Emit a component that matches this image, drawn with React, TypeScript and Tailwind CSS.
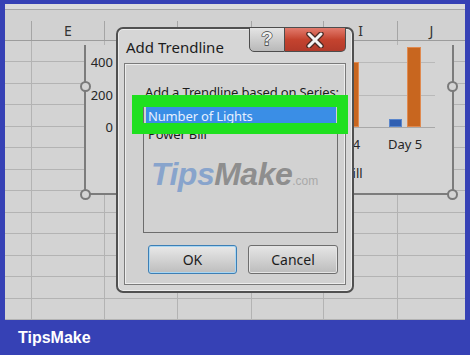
import React from "react";

const cols = [
  { w: 27, label: "" },
  { w: 73, label: "E" },
  { w: 73, label: "" },
  { w: 74, label: "" },
  { w: 72, label: "" },
  { w: 74, label: "I" },
  { w: 67, label: "J" },
];

const rows = Array.from({ length: 13 }, (_, i) => i);

const groups = [
  { day: "Day 1", blue: 4, orange: 30 },
  { day: "Day 2", blue: 5, orange: 45 },
  { day: "Day 3", blue: 6, orange: 55 },
  { day: "Day 4", blue: 7, orange: 65 },
  { day: "Day 5", blue: 8, orange: 80 },
];

const handle =
  "absolute w-[11px] h-[11px] rounded-full border-2 border-[#7a7a7a] bg-[#d4d4d4]";

function Chart() {
  return (
    <div className="absolute left-[84px] top-[45px] w-[370px] h-[150px] bg-[#d4d4d4] border-l-2 border-r-2 border-b-2 border-[#7c7c7c] flex flex-col text-[13px] text-[#262626]">
      <div className="mt-[17px] flex items-start h-[66px]">
        <div className="w-[29px] h-[66px] -mt-[9px] flex flex-col items-end pr-[2px] leading-[18px]">
          <div className="h-[18px] shrink-0">400</div>
          <div className="h-[18px] shrink-0 mt-[15px]">200</div>
          <div className="h-[18px] shrink-0 mt-[14px]">0</div>
        </div>
        <div className="relative ml-[3px] w-[317px] h-[66px]">
          <div className="h-[33px] border-t border-[#b9b9b9]" />
          <div className="h-[33px] border-t border-b border-t-[#b9b9b9] border-b-[#a8a8a8]" />
          <div className="absolute left-0 right-0 bottom-[1px] flex items-end pl-[23px] gap-[30px]">
            {groups.map((g) => (
              <div key={g.day} className="flex items-end gap-[5px]">
                <div
                  className="w-[13px] bg-[#2f5fb2] border border-[#5a86cc]"
                  style={{ height: g.blue }}
                />
                <div
                  className="w-[14px] bg-[#c8661f] border border-[#e08a50]"
                  style={{ height: g.orange }}
                />
              </div>
            ))}
          </div>
        </div>
      </div>
      <div className="mt-[7px] flex pl-[55px] gap-[30px] leading-[18px]">
        {groups.map((g) => (
          <div key={g.day} className="w-[32px] flex justify-center whitespace-nowrap">
            {g.day}
          </div>
        ))}
      </div>
      <div className="mt-[11px] flex justify-center items-center gap-[12px] leading-[18px] pr-[14px]">
        <div className="flex items-center gap-[4px]">
          <div className="w-[7px] h-[7px] bg-[#2f5fb2]" />
          <span>Number of Lights</span>
        </div>
        <div className="flex items-center gap-[4px]">
          <div className="w-[7px] h-[7px] bg-[#c8661f]" />
          <span>Power Bill</span>
        </div>
      </div>
    </div>
  );
}

function Dialog() {
  return (
    <div className="absolute left-[116px] top-[27px] w-[238px] h-[266px] rounded-[7px] border-2 border-[#505050] bg-[#d6d6d6] shadow-[inset_0_0_0_1px_#ececec] flex flex-col">
      <div className="h-[34px] shrink-0 pl-[8px] flex items-center text-[15px] text-[#1c1c1c] pt-[2px]">
        Add Trendline
      </div>
      <div className="flex-1 mx-[6px] mb-[6px] border border-[#7a7a7a] shadow-[inset_0_0_0_1px_#ededed] bg-[#d1d1d1] pt-[19px] px-[18px]">
        <div className="h-[18px] leading-[18px] pl-[2px] text-[13px] tracking-[-0.15px] text-[#1c1c1c] whitespace-nowrap">
          Add a Trendline based on Series:
        </div>
        <div className="mt-[4px] w-[195px] h-[128px] border border-[#6d6d6d] bg-[#d2d2d2] p-px">
          <div className="h-[18px] leading-[18px] bg-[#3a8ee6] text-[#e6f0ff] text-[13px] tracking-[-0.15px] pl-[2px] ml-px">
            Number of Lights
          </div>
          <div className="h-[18px] leading-[18px] text-[#1c1c1c] text-[13px] tracking-[-0.15px] pl-[3px]">
            Power Bill
          </div>
        </div>
        <div className="mt-[12px] ml-[5px] w-[190px] flex justify-between">
          <div className="w-[89px] h-[29px] rounded-[3px] border border-[#3d7fb5] shadow-[inset_0_0_0_1px_#a9d6f2] bg-gradient-to-b from-[#e9e9e9] to-[#bdbdbd] flex items-center justify-center text-[14px] text-[#1c1c1c]">
            OK
          </div>
          <div className="w-[90px] h-[29px] rounded-[3px] border border-[#6e6e6e] shadow-[inset_0_0_0_1px_#e4e4e4] bg-gradient-to-b from-[#e6e6e6] to-[#bcbcbc] flex items-center justify-center text-[14px] text-[#1c1c1c]">
            Cancel
          </div>
        </div>
      </div>
      <div className="absolute top-[-2px] right-[6px] flex h-[25px]">
        <div
          className="w-[36px] h-full rounded-bl-[5px] border border-[#4d4d4d] bg-gradient-to-b from-[#e4e4e4] to-[#b9b9b9] flex items-center justify-center text-[19px] font-bold text-[#f0f0f0] [-webkit-text-stroke:1.3px_#3a3a3a] [paint-order:stroke_fill]"
          style={{ fontFamily: '"Liberation Sans", Arial, sans-serif' }}
        >
          ?
        </div>
        <div className="w-[61px] h-full rounded-br-[5px] border border-l-0 border-[#4d4d4d] bg-gradient-to-b from-[#e27a6c] via-[#c4432f] to-[#b23a2a] flex items-center justify-center">
          <svg width="20" height="16" viewBox="0 0 20 16">
            <path d="M4 2 L16 14 M16 2 L4 14" stroke="#4a2a24" strokeWidth="5.5" strokeLinecap="round" />
            <path d="M4 2 L16 14 M16 2 L4 14" stroke="#f4f4f4" strokeWidth="3" strokeLinecap="round" />
          </svg>
        </div>
      </div>
    </div>
  );
}

export default function App() {
  return (
    <div
      className="relative w-[470px] h-[355px] overflow-hidden bg-[#3641b5]"
      style={{ fontFamily: '"Noto Sans", "Open Sans", sans-serif' }}
    >
      <div className="pt-[4px] px-[5px]">
        <div className="w-[460px] h-[316px] bg-[#d3d3d3] overflow-hidden flex flex-col">
          <div className="h-[7px] bg-[#dcdcdc] border-b border-[#a8a8a8]" />
          <div className="h-[14px] bg-[#d1d1d1]" />
          <div className="h-[20px] flex border-b border-[#9c9c9c] bg-[#d1d1d1]">
            {cols.map((c, i) => (
              <div
                key={i}
                style={{ width: c.w }}
                className={`h-full shrink-0 flex items-center justify-center text-[14px] text-[#333] ${
                  i < cols.length - 1 ? "border-r border-[#a5a5a5]" : ""
                }`}
              >
                {c.label}
              </div>
            ))}
          </div>
          {rows.map((r) => (
            <div key={r} className="h-[21.5px] flex shrink-0 border-b border-[#b3b3b3]">
              {cols.map((c, i) => (
                <div
                  key={i}
                  style={{ width: c.w }}
                  className={`h-full shrink-0 ${i < cols.length - 1 ? "border-r border-[#b3b3b3]" : ""}`}
                />
              ))}
            </div>
          ))}
        </div>
      </div>
      <div className="h-[35px] pl-[18px] flex items-center">
        <span
          className="text-white text-[16px] font-bold"
          style={{ fontFamily: '"Liberation Sans", Arial, sans-serif' }}
        >
          TipsMake
        </span>
      </div>

      <Chart />
      <div className={`${handle} left-[80px] top-[81px]`} />
      <div className={`${handle} left-[80px] top-[189px]`} />
      <div className={`${handle} left-[447px] top-[81px]`} />
      <div className={`${handle} left-[447px] top-[189px]`} />

      <Dialog />

      <div className="absolute left-[132px] top-[95px] w-[216px] h-[39px] border-[11px] border-t-[12px] border-[#1fe01f]" />

      <div
        className="absolute left-[151px] top-[154px] text-[32px] font-bold italic leading-[40px] tracking-[-0.5px] whitespace-nowrap"
        style={{ fontFamily: '"Liberation Sans", Arial, sans-serif' }}
      >
        <span className="text-[#88a4cc]">Tips</span>
        <span className="text-[#8e8e8e]">Make</span>
        <span className="text-[12px] not-italic font-normal text-[#a9a9a9] tracking-normal">.com</span>
      </div>
    </div>
  );
}
